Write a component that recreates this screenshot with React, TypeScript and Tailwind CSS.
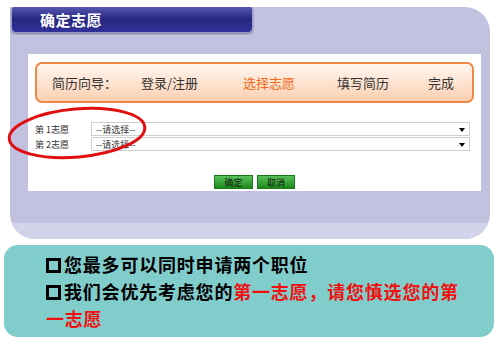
import React from "react";

const cjk = { fontFamily: '"Noto Sans CJK SC", "Noto Sans", sans-serif' };

function Select() {
  return (
    <div className="relative flex-1 h-[14px] bg-white border border-[#cfcfcf] flex items-center pl-[4px] text-[9px] text-[#333] leading-none">
      <span>--请选择--</span>
      <span className="absolute right-[4px] top-[5px] w-0 h-0 border-l-[3px] border-r-[3px] border-t-[4px] border-l-transparent border-r-transparent border-t-black" />
    </div>
  );
}

function Bullet() {
  return <span className="inline-block w-[15px] h-[15px] border-[3px] border-black mr-[3px] align-[-1px]" />;
}

export default function App() {
  return (
    <div className="w-[503px] h-[345px] bg-white relative overflow-hidden" style={cjk}>
      <div className="ml-[10px] mt-[7px] w-[480px] h-[232px] bg-[#c2c2e0] rounded-[25px] rounded-tl-none flex flex-col overflow-hidden">
        <div className="-mt-[2px] ml-[1px] w-[242px] h-[28px] rounded-[5px] border border-[#9a9ad0] bg-gradient-to-b from-[#5a5ab8] via-[#28287e] to-[#30309a] shadow-[0_1px_2px_rgba(0,0,0,0.4)] flex items-center pl-[28px]">
          <span className="text-white text-[15px] font-bold leading-none tracking-[0.5px]">确定志愿</span>
        </div>
        <div className="ml-[18px] mt-[21px] w-[453px] h-[137px] bg-white flex flex-col px-[7px] pt-[8px]">
          <div className="h-[41px] rounded-[7px] border-2 border-[#f08848] bg-gradient-to-b from-[#fff6ef] to-[#fbd0b2] flex items-center text-[13px] text-[#333] leading-none">
            <span className="ml-[15px] w-[89px]">简历向导：</span>
            <span className="w-[102px]">登录/注册</span>
            <span className="w-[94px] text-[#f26a20]">选择志愿</span>
            <span className="w-[91px]">填写简历</span>
            <span>完成</span>
          </div>
          <div className="mt-[19px] flex flex-col gap-[1px] pr-[4px]">
            <div className="flex items-center">
              <span className="w-[56px] text-[9px] text-[#333] leading-none whitespace-pre">第 1志愿</span>
              <Select />
            </div>
            <div className="flex items-center">
              <span className="w-[56px] text-[9px] text-[#333] leading-none whitespace-pre">第 2志愿</span>
              <Select />
            </div>
          </div>
          <div className="mt-[24px] flex justify-center gap-[4px]">
            <div className="w-[39px] h-[14px] bg-gradient-to-b from-[#58c058] to-[#1a8a1a] border border-[#1a7a1a] flex items-center justify-center text-[9px] text-[#102010] leading-none">确定</div>
            <div className="w-[38px] h-[14px] bg-gradient-to-b from-[#58c058] to-[#1a8a1a] border border-[#1a7a1a] flex items-center justify-center text-[9px] text-[#102010] leading-none">取消</div>
          </div>
        </div>
        <div className="flex-1" />
        <div className="h-[16px] bg-[#d3d3ea]" />
      </div>
      <div className="ml-[4px] mt-[6px] w-[490px] h-[92px] rounded-[14px] bg-[#80cdcc] pl-[42px] pt-[6px]">
        <div className="text-[18px] font-bold leading-[27px] text-black tracking-[0.8px] whitespace-nowrap">
          <div><Bullet />您最多可以同时申请两个职位</div>
          <div><Bullet />我们会优先考虑您的<span className="text-[#f01010]">第一志愿，请您慎选您的第</span></div>
          <div className="text-[#f01010]">一志愿</div>
        </div>
      </div>
      <svg className="absolute left-0 top-0 pointer-events-none" width="503" height="345">
        <ellipse cx="77" cy="133" rx="68" ry="24" transform="rotate(-5 77 133)" fill="none" stroke="#e01010" strokeWidth="3" />
      </svg>
    </div>
  );
}
